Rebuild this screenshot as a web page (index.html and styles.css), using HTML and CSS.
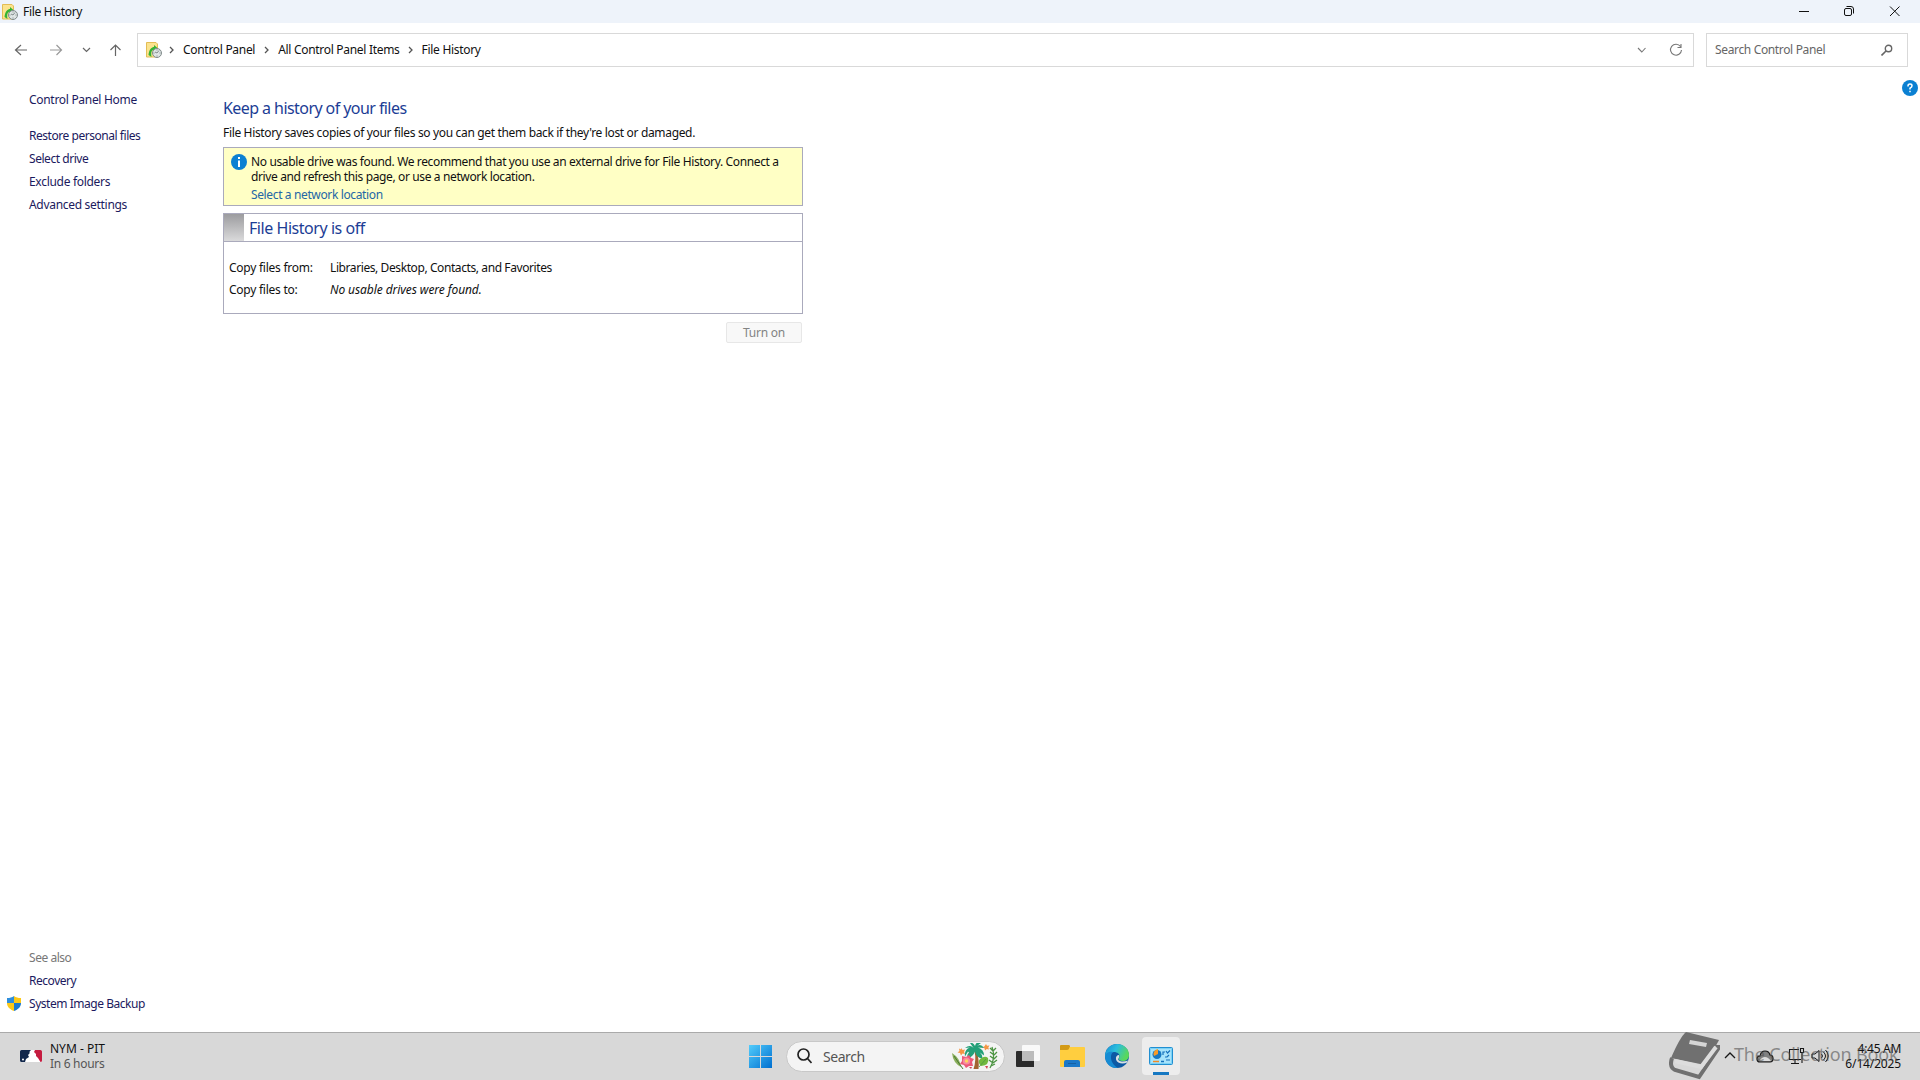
FILE: index.html
```html
<!DOCTYPE html>
<html lang="en">
<head>
    <meta charset="UTF-8">
    <title>File History</title>
    <link rel="stylesheet" href="styles.css">
</head>
<body>
    <svg class="defs" width="0" height="0">
        <symbol id="fh" viewBox="0 0 16 16">
            <path d="M.5 .5h9.500l1.500 1.500v13H.5z" fill="#fbe38e" stroke="#e3bd55"/>
            <path d="M2.500 13C3 7 6 5 8 5V3l4 3.500L8 10V8C5 8 5 11 5.500 15z" fill="#35b335"/>
            <circle cx="11" cy="11" r="4.500" fill="#dfe5e5" stroke="#818b8b"/>
            <path d="M11 11l2-2.500M11 11l-2-1M11 7.500v1M11 13.500v1M7.500 11h1M13.500 11h1" stroke="#697575" fill="none" stroke-width=".8"/>
        </symbol>
    </svg>

    <div class="titlebar">
        <svg width="16" height="16"><use href="#fh"/></svg>
        <span class="title">File History</span>
        <svg class="window-buttons" width="112" height="22" viewBox="0 0 112 22" fill="none" stroke="#111">
            <path d="M6 10.500h10"/>
            <rect x="51.500" y="7.500" width="7" height="7" rx="1.500"/>
            <path d="M53.500 5.500h4.500a2.500 2.500 0 0 1 2.500 2.500v4.500"/>
            <path d="M97 5.500l9.500 9.500M106.500 5.500L97 15"/>
        </svg>
    </div>

    <div class="toolbar">
        <svg class="nav" width="124" height="34" viewBox="0 0 124 34" fill="none" stroke="#666" stroke-width="1.200">
            <path d="M27 17H16M21 12l-5.500 5 5.500 5"/>
            <path d="M50 17h11.500M56.500 12l5 5-5 5" stroke="#999"/>
            <path d="M83 15l3.500 3.500L90 15"/>
            <path d="M115.500 23V12M110.500 17l5-5 5 5"/>
        </svg>
        <div class="address">
            <svg width="16" height="16"><use href="#fh"/></svg>
            <svg class="sep first" width="6" height="8"><path d="M1 1l3 3-3 3"/></svg>
            <span>Control Panel</span>
            <svg class="sep second" width="6" height="8"><path d="M1 1l3 3-3 3"/></svg>
            <span>All Control Panel Items</span>
            <svg class="sep" width="6" height="8"><path d="M1 1l3 3-3 3"/></svg>
            <span>File History</span>
            <svg class="address-tools" width="50" height="16" viewBox="0 0 50 16" fill="none" stroke="#777" stroke-width="1.100">
                <path d="M1 6l3.800 4L8.500 6"/>
                <path d="M43.500 4.500A5.500 5.500 0 1 0 44.500 8M44 2v3.500h-3.500"/>
            </svg>
        </div>
        <div class="search">
            <span>Search Control Panel</span>
            <svg width="12" height="12" viewBox="0 0 12 12" fill="none" stroke="#666"><circle cx="7.500" cy="4.500" r="3.200" stroke-width="1.400"/><path d="M5 7l-4.500 4.500" stroke-width="1.600"/></svg>
        </div>
    </div>

    <div class="page">
        <div class="sidebar">
            <a class="home">Control Panel Home</a>
            <a class="tight">Restore personal files</a>
            <a class="tight">Select drive</a>
            <a>Exclude folders</a>
            <a>Advanced settings</a>
            <div class="see-also">
                <span class="muted">See also</span>
                <a>Recovery</a>
                <a class="shielded">
                    <svg width="14" height="15" viewBox="0 0 14 15">
                        <path d="M7 0C5 1.500 3 2 0 2v5h7z" fill="#2f8fdc"/>
                        <path d="M7 0c2 1.500 4 2 7 2v5H7z" fill="#fcc918"/>
                        <path d="M0 7c0 4 3 6.500 7 8V7z" fill="#fcc918"/>
                        <path d="M14 7c0 4-3 6.500-7 8V7z" fill="#1c7ad0"/>
                    </svg>
                    <span>System Image Backup</span>
                </a>
            </div>
        </div>

        <div class="content">
            <h1>Keep a history of your files</h1>
            <p class="intro">File History saves copies of your files so you can get them back if they're lost or damaged.</p>
            <div class="notice">
                <svg width="16" height="16" viewBox="0 0 16 16"><circle cx="8" cy="8" r="8" fill="#0b80d2"/><path d="M7 3h2v2H7zM7 6.500h2V13H7z" fill="#fff"/></svg>
                <div class="notice-text">
                    <p>No usable drive was found. We recommend that you use an external drive for File History. Connect a<br>drive and refresh this page, or use a network location.</p>
                    <a>Select a network location</a>
                </div>
            </div>
            <div class="status">
                <div class="status-head">
                    <div class="status-mark"></div>
                    <h2>File History is off</h2>
                </div>
                <dl>
                    <dt>Copy files from:</dt>
                    <dd>Libraries, Desktop, Contacts, and Favorites</dd>
                    <dt>Copy files to:</dt>
                    <dd><em>No usable drives were found.</em></dd>
                </dl>
            </div>
            <button disabled>Turn on</button>
        </div>

        <svg class="help" width="16" height="16" viewBox="0 0 16 16"><circle cx="8" cy="8" r="8" fill="#0b80d2"/><path d="M6 6.500V6q0-2 2-2t2 1.700Q10 7 8 8.200V9.500M8 10.800v1.500" stroke="#fff" stroke-width="1.500" fill="none"/></svg>
    </div>

    <div class="taskbar">
        <div class="widget">
            <svg width="22" height="12" viewBox="0 0 22 12">
                <rect width="22" height="12" rx="1.500" fill="#fff"/>
                <path d="M1.500 0H11Q9 1 9.500 3.500L8 5l1 2-3 2-1 3H1.500Q0 12 0 10.500v-9Q0 0 1.500 0z" fill="#12284c"/>
                <path d="M15 0h5.500Q22 0 22 1.500v9q0 1.500-1.500 1.500L18 8l-2-2V4l-2-2z" fill="#c51c40"/>
                <circle cx="3" cy="9.500" r="1" fill="#fff"/>
            </svg>
            <div><p class="game">NYM - PIT</p><p class="when">In 6 hours</p></div>
        </div>

        <div class="apps">
            <svg width="23" height="23" viewBox="0 0 23 23">
                <defs><linearGradient id="win" x1="0" y1="0" x2="23" y2="23" gradientUnits="userSpaceOnUse"><stop stop-color="#52ccfb"/><stop offset="1" stop-color="#006fd0"/></linearGradient></defs>
                <path d="M0 0h11v11H0zM12 0h11v11H12zM0 12h11v11H0zM12 12h11v11H12z" fill="url(#win)"/>
            </svg>
            <div class="task-search">
                <svg width="15" height="16" viewBox="0 0 15 16" fill="none" stroke="#222" stroke-width="1.700"><circle cx="6.500" cy="6.500" r="5.500"/><path d="M10.500 10.500l4 4.500"/></svg>
                <span>Search</span>
                <svg class="tropical" width="46" height="27" viewBox="0 0 46 27">
                    <path d="M0 10q8 5 9 14Q1 20 0 10z" fill="#8aae5c"/>
                    <path d="M2 13l9 13" stroke="#4a7833"/>
                    <path d="M9.500 5l1 2 2.500-.5-1 2.500 1 2-2.500-.5-1.500 2-1-2.500-2.500-.5 2-1.500-.5-2.500 2 1zM34 1l1 1.700 2.500-.2-1.200 2 .7 2-2.200-.5L33 7.500l-.5-2.200-2-1 2-1z" fill="#f49645"/>
                    <path d="M22.500 8q2 9-1 18h5q1-9-2-18z" fill="#a36431"/>
                    <path d="M23 7Q19 0 13 5l5-.5q-6 2-5 9l3-5 1 1q-3 3-1 6 5-2 7-7 1 6 7 7 1-3-2-6l4 3q0-6-6-8l6 .5q-3-5-7-2l4-3q-5-2-6 3-2-4-5-3z" fill="#23a078"/>
                    <path d="M10 13l4 1 3-2 2 3 3 1-2 3 1 4-4 0-3 2-2-3-4-1 2-3z" fill="#ec5877"/>
                    <circle cx="14.500" cy="18" r="3.600" fill="#f58ba0"/>
                    <circle cx="14.500" cy="18" r="1.700" fill="#ffd45b"/>
                    <path d="M28 16q5-4 8-1 2 7-7 8-4-4-1-7z" fill="#72b83e"/>
                    <path d="M27 24l7-8" stroke="#4c9442" stroke-width=".8"/>
                    <path d="M40 4q4 11-2 21M41 8l-3-3M42 12l-4-3M42 16l-4-3M41 20l-4-3M41 8l3-3M42 12l3-3M42 16l3-3M41 20l4-3M39 23l4-2" stroke="#4c9442" stroke-width="1.300" fill="none"/>
                    <path d="M33 23l3 0-1 3zM17 24l3 0-1 2z" fill="#d14652"/>
                </svg>
            </div>
            <svg width="24" height="22" viewBox="0 0 24 22"><rect x="6" width="18" height="16" rx="1" fill="#f9f9f9"/><path d="M1 6h5v10h12v6H1q-1 0-1-1V7q0-1 1-1z" fill="#2b2b2b"/><path d="M6 6h12v10H6z" fill="#bcbcbc"/></svg>
            <svg class="explorer" width="25" height="22" viewBox="0 0 25 22"><path d="M1 2h23q1 0 1 1v18q0 1-1 1H1q-1 0-1-1V3q0-1 1-1z" fill="#ffce3f"/><path d="M1 0h8q1 0 1 1.500L8.500 4.500 7 5H0V1q0-1 1-1z" fill="#d39a16"/><path d="M4 22v-5q0-2 2-2h12q2 0 2 2v5z" fill="#1b78c8"/><path d="M8 18.500h8" stroke="#1660a3"/></svg>
            <svg class="edge" width="24" height="24" viewBox="0 0 24 24">
                <defs>
                    <linearGradient id="edgeTop" x2="1" y2=".4"><stop stop-color="#168bd3"/><stop offset=".5" stop-color="#2bbddd"/><stop offset="1" stop-color="#59d85c"/></linearGradient>
                </defs>
                <circle cx="12" cy="12" r="12" fill="#0c59a4"/>
                <path d="M0 11C1 4 6 0 12 0c8 0 12 6 12 11 0 4-3 6-6 6-3 0-5-1-4-3 2-4-2-6-5-6-4 0-7 2-9 6z" fill="url(#edgeTop)"/>
                <path d="M0 12c1-3 4-5 8-4-4 4-2 12 5 16C6 24.500 0 20 0 12z" fill="#168bd3"/>
                <path d="M14 11c1 3-2 4 0 5.500s6 1 9 0l-1 2c-4 2-10 1-11-3-.5-3 1-4.500 3-4.500z" fill="#d8dfe2"/>
            </svg>
            <div class="active-app">
                <svg width="24" height="18" viewBox="0 0 24 18"><rect x=".5" y=".5" width="23" height="17" rx="1" fill="#7cd2f6" stroke="#218fd1"/><rect x="2" y="2" width="20" height="14" fill="#a6e3fb"/><circle cx="8" cy="7.500" r="4.500" fill="#1678c2"/><path d="M9 7V2A5 5 0 0 0 5 9z" fill="#f79b28"/><path d="M4 14.500h6" stroke="#f08924" stroke-width="1.500"/><path d="M12 14.500h3" stroke="#1671bc" stroke-width="1.500"/><path d="M14 8V5h2M17 4l1.500 2L21 3.500M16 10h2l2-2M17 13h4" stroke="#1671bc" stroke-width="1.200" fill="none"/></svg>
            </div>
        </div>

        <div class="tray">
            <svg class="chevron" width="13" height="24" viewBox="0 0 13 24" fill="none" stroke="#171717" stroke-width="1.300"><path d="M1 14l5-5 5 5"/></svg>
            <svg class="cloud" width="18" height="13" viewBox="0 0 18 13"><path d="M4 12Q1 12 1 9t3-3q1-5 5-5 4 0 5 4 3 0 3 3.500T14 12z" fill="#808080" stroke="#171717" stroke-width="1.200"/><path d="M3 11q3-4 6-4t6 4z" fill="#ddd"/></svg>
            <svg class="network" width="18" height="18" viewBox="0 0 18 18" fill="none" stroke="#171717" stroke-width="1.100"><path d="M11 2.500H1.500v10H13M7 13v3M3 16.500h8M12.500 1.500h3v4h-3zM14 6v10"/></svg>
            <svg class="volume" width="18" height="14" viewBox="0 0 18 14" fill="none" stroke="#171717"><path d="M1 5h3l4-3.500v11L4 9H1zM10.500 5q2 2 0 4M12.500 3q4 4 0 8M14.500 1q5.500 6 0 12"/></svg>
            <div class="clock"><span>4:45 AM</span><span class="date">6/14/2025</span></div>
        </div>

        <div class="watermark">
            <svg width="52" height="48" viewBox="0 0 52 48"><path d="M17 0l33 8q-2 4-14 25L2 26Q11 5 17 0z" fill="#707070"/><path d="M21 8l17 3-1 4-17-3z" fill="#d5d5d5"/><path d="M3 26q-3 9 3 12l24 7 19-28v-4" fill="none" stroke="#707070" stroke-width="4"/><path d="M6 29l26 6 15-20" fill="none" stroke="#ddd" stroke-width="4"/></svg>
            <span>The Collection Book</span>
        </div>
    </div>
</body>
</html>
```
FILE: styles.css
```css
* {
    box-sizing: border-box;
}

body {
    width: 1920px;
    height: 1080px;
    margin: 0;
    display: flex;
    flex-direction: column;
    overflow: hidden;
    background: #fff;
    color: #111;
    font: 12px/15px "Noto Sans", "Open Sans", sans-serif;
    letter-spacing: -0.3px;
    white-space: nowrap;
}

p, h1, h2, dl, dd {
    margin: 0;
}

svg {
    display: block;
    flex: none;
}

.defs {
    position: absolute;
}

.titlebar {
    height: 23px;
    flex: none;
    display: flex;
    align-items: center;
    padding-left: 2px;
    background: #eef3fa;
}

.title {
    margin-left: 5px;
}

.window-buttons {
    margin-left: auto;
    margin-right: 15px;
}

.toolbar {
    height: 44px;
    flex: none;
    display: flex;
    padding: 10px 12px 0 0;
}

.nav {
    margin-right: 13px;
}

.address {
    width: 1557px;
    height: 34px;
    display: flex;
    align-items: center;
    padding: 0 0 1px 8px;
    border: 1px solid #d9d9d9;
}

.sep {
    margin: 0 8px;
    fill: none;
    stroke: #555;
    stroke-width: 1.3;
}

.sep.first {
    margin-left: 7px;
}

.sep.second {
    margin-left: 9px;
}

.address-tools {
    margin-left: auto;
    margin-right: 6px;
}

.search {
    width: 202px;
    height: 34px;
    margin-left: 12px;
    padding: 0 14px 1px 8px;
    display: flex;
    align-items: center;
    justify-content: space-between;
    border: 1px solid #d9d9d9;
    color: #666;
    letter-spacing: -0.35px;
}

.page {
    flex: 1;
    display: flex;
    padding-top: 13px;
}

.sidebar {
    width: 223px;
    padding: 12px 0 21px 29px;
    display: flex;
    flex-direction: column;
    color: #1b1a5e;
}

.sidebar a, .muted {
    display: block;
    margin-bottom: 8px;
}

.sidebar .home {
    margin-bottom: 21px;
}

.tight {
    letter-spacing: -0.46px;
}

.see-also {
    margin-top: auto;
    letter-spacing: -0.46px;
}

.muted {
    color: #777;
}

.sidebar .shielded {
    display: flex;
    gap: 8px;
    margin: 0 0 0 -22px;
}

.content {
    width: 580px;
    padding-top: 17px;
}

h1, h2 {
    font-size: 16px;
    line-height: 22px;
    font-weight: 400;
    color: #1c3d95;
}

h1 {
    letter-spacing: -0.57px;
}

h2 {
    letter-spacing: -0.45px;
}

.intro {
    margin: 6px 0 7px;
    letter-spacing: -0.34px;
}

.notice {
    height: 59px;
    padding: 6px 7px;
    display: flex;
    gap: 4px;
    border: 1px solid #aaaabc;
    background: #ffffc5;
    letter-spacing: -0.37px;
}

.notice-text a {
    display: block;
    margin-top: 3px;
    color: #2467a6;
}

.status {
    height: 101px;
    margin-top: 7px;
    border: 1px solid #aaaabc;
}

.status-head {
    height: 28px;
    display: flex;
    border-bottom: 1px solid #aaaabc;
}

.status-mark {
    width: 20px;
    margin-right: 5px;
    background: linear-gradient(#9c9c9f, #dadadb);
}

.status h2 {
    line-height: 29px;
}

.status dl {
    display: grid;
    grid-template-columns: 101px 1fr;
    row-gap: 7px;
    padding: 18px 5px;
}

.status dt {
    letter-spacing: -0.25px;
}

.status dd {
    letter-spacing: -0.41px;
}

.status em {
    letter-spacing: -0.08px;
}

button {
    display: block;
    width: 76px;
    height: 21px;
    margin: 8px 1px 0 auto;
    padding: 0;
    border: 1px solid #e7e7e7;
    border-radius: 2px;
    background: #f8f8f8;
    color: #838383;
    font: inherit;
    letter-spacing: -0.25px;
}

.help {
    margin: 0 2px 0 auto;
}

.taskbar {
    position: relative;
    height: 48px;
    flex: none;
    display: flex;
    align-items: center;
    padding-bottom: 1px;
    border-top: 1px solid #aaa;
    background: #d8d8d8;
}

.widget {
    width: 749px;
    display: flex;
    gap: 8px;
    align-items: center;
    padding-left: 20px;
}

.game {
    letter-spacing: 0;
}

.when {
    color: #555;
}

.apps {
    display: flex;
    align-items: center;
}

.task-search {
    width: 219px;
    height: 31px;
    margin: 0 11px 0 14px;
    padding: 0 6px 0 10px;
    display: flex;
    align-items: center;
    border: 1px solid #c8c8c8;
    border-radius: 16px;
    background: #f4f4f4;
    color: #555;
    font-size: 14px;
    letter-spacing: -0.45px;
}

.task-search span {
    margin-left: 11px;
}

.tropical {
    margin-left: auto;
}

.explorer, .edge {
    margin-left: 20px;
}

.active-app {
    width: 38px;
    height: 38px;
    margin-left: 13px;
    padding: 10px 7px 0;
    border-radius: 4px;
    background: linear-gradient(#1678c2, #1678c2) 11px 35px / 16px 3px no-repeat #ededed;
}

.tray {
    display: flex;
    align-items: center;
    margin-left: auto;
    margin-right: 19px;
}

.cloud {
    margin-left: 19px;
}

.network {
    margin-left: 14px;
}

.volume {
    margin-left: 5px;
}

.clock {
    width: 72px;
    display: flex;
    flex-direction: column;
    text-align: right;
}

.date {
    letter-spacing: -0.15px;
}

/* mark lying over the tray */
.watermark {
    position: absolute;
    left: 1669px;
    top: -1px;
    display: flex;
    align-items: center;
    gap: 13px;
    color: rgba(80, 80, 80, 0.6);
    font-size: 18px;
    letter-spacing: -0.15px;
}

.watermark span {
    padding-bottom: 4px;
}
```
